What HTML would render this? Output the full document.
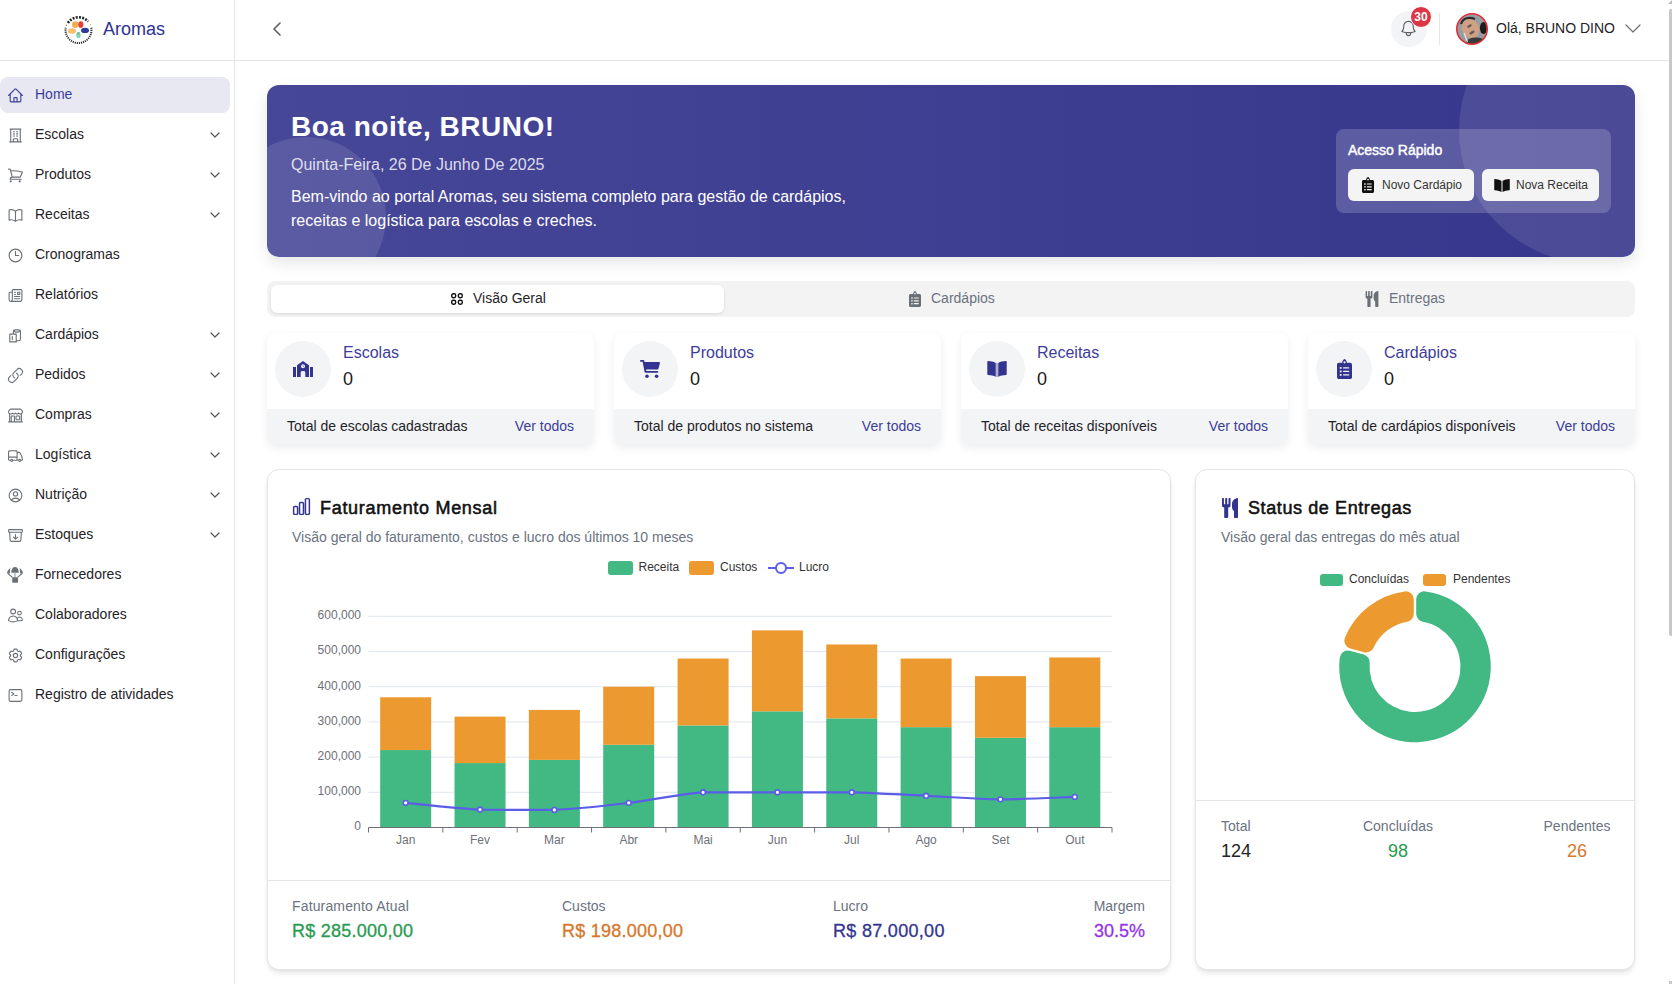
<!DOCTYPE html><html><head><meta charset="utf-8"><style>
html,body{margin:0;padding:0;}
body{width:1672px;height:984px;overflow:hidden;position:relative;background:#fff;font-family:"Liberation Sans", sans-serif;}
.a{position:absolute;display:block;}
.t{position:absolute;white-space:nowrap;line-height:1;}

</style></head><body>
<div class="a" style="left:234px;top:0px;width:1px;height:984px;background:#e4e4e7;"></div>
<div class="a" style="left:0px;top:60px;width:1669px;height:1px;background:#e4e4e7;"></div>
<svg class="a" style="left:61px;top:13px;" width="34" height="34" viewBox="0 0 34 34"><path d="M6.97 9.9 A12.7 12.7 0 0 1 27.08 8.67" fill="none" stroke="#222" stroke-width="2.6" stroke-dasharray="1.9 1.3"/><path d="M30.3 14.74 A13 13 0 1 1 4.7 14.74" fill="none" stroke="#333" stroke-width="2" stroke-dasharray="1.2 .9"/><circle cx="5.4" cy="12.2" r=".6" fill="#d04040"/><circle cx="29.6" cy="11.6" r=".5" fill="#777"/><ellipse cx="14.2" cy="11.6" rx="3.2" ry="3.4" fill="#f0a33a" opacity=".9"/><ellipse cx="19.8" cy="11.6" rx="2.6" ry="3.4" fill="#e23f36"/><ellipse cx="11" cy="18" rx="4" ry="2.8" fill="#f3b65a" opacity=".9"/><ellipse cx="24" cy="17.4" rx="4" ry="2.6" fill="#2f3a9c"/><ellipse cx="17.4" cy="22" rx="2.2" ry="3.2" fill="#6fd3ae" opacity=".9"/><ellipse cx="17.4" cy="20.4" rx="1.6" ry="1" fill="#999" opacity=".7"/></svg>
<div class="t" style="left:103.00px;top:20px;font-size:18px;color:#2e3192;font-weight:400;">Aromas</div>
<div class="a" style="left:0px;top:77px;width:230px;height:36px;background:#e8e8f3;border-radius:8px;"></div>
<div class="t" style="left:35.00px;top:87px;font-size:14px;color:#3c3d99;font-weight:400;">Home</div>
<svg class="a" style="left:6.5px;top:86.5px;" width="17" height="17" viewBox="0 0 24 24"><g><path d="M2.25 12l8.954-8.955c.44-.439 1.152-.439 1.591 0L21.75 12M4.5 9.75v10.125c0 .621.504 1.125 1.125 1.125H9.75v-4.875c0-.621.504-1.125 1.125-1.125h2.25c.621 0 1.125.504 1.125 1.125V21h4.125c.621 0 1.125-.504 1.125-1.125V9.75M8.25 21h8.25" fill="none" stroke="#3c3d99" stroke-width="1.55" stroke-linecap="round" stroke-linejoin="round"/></g></svg>
<div class="t" style="left:35.00px;top:127px;font-size:14px;color:#1f2328;font-weight:400;">Escolas</div>
<svg class="a" style="left:6.5px;top:126.5px;" width="17" height="17" viewBox="0 0 24 24"><g><path d="M3.75 21h16.5M4.5 3h15M5.25 3v18m13.5-18v18M9 6.75h1.5m-1.5 3h1.5m-1.5 3h1.5m3-6H15m-1.5 3H15m-1.5 3H15M9 21v-3.375c0-.621.504-1.125 1.125-1.125h3.75c.621 0 1.125.504 1.125 1.125V21" fill="none" stroke="#6b6f76" stroke-width="1.55" stroke-linecap="round" stroke-linejoin="round"/></g></svg>
<svg class="a" style="left:210px;top:132px;" width="10" height="6" viewBox="0 0 10 6"><path d="M1 1 L5 5 L9 1" fill="none" stroke="#55595f" stroke-width="1.2" stroke-linecap="round" stroke-linejoin="round"/></svg>
<div class="t" style="left:35.00px;top:167px;font-size:14px;color:#1f2328;font-weight:400;">Produtos</div>
<svg class="a" style="left:6.5px;top:166.5px;" width="17" height="17" viewBox="0 0 24 24"><g><path d="M2.25 3h1.386c.51 0 .955.343 1.087.835l.383 1.437M7.5 14.25a3 3 0 00-3 3h15.75m-12.75-3h11.218c1.121-2.3 2.1-4.684 2.924-7.138a60.114 60.114 0 00-16.536-1.84M7.5 14.25L5.106 5.272M6 20.25a.75.75 0 11-1.5 0 .75.75 0 011.5 0zm12.75 0a.75.75 0 11-1.5 0 .75.75 0 011.5 0z" fill="none" stroke="#6b6f76" stroke-width="1.55" stroke-linecap="round" stroke-linejoin="round"/></g></svg>
<svg class="a" style="left:210px;top:172px;" width="10" height="6" viewBox="0 0 10 6"><path d="M1 1 L5 5 L9 1" fill="none" stroke="#55595f" stroke-width="1.2" stroke-linecap="round" stroke-linejoin="round"/></svg>
<div class="t" style="left:35.00px;top:207px;font-size:14px;color:#1f2328;font-weight:400;">Receitas</div>
<svg class="a" style="left:6.5px;top:206.5px;" width="17" height="17" viewBox="0 0 24 24"><g><path d="M12 6.042A8.967 8.967 0 006 3.75c-1.052 0-2.062.18-3 .512v14.25A8.987 8.987 0 016 18c2.305 0 4.408.867 6 2.292m0-14.25a8.966 8.966 0 016-2.292c1.052 0 2.062.18 3 .512v14.25A8.987 8.987 0 0018 18a8.967 8.967 0 00-6 2.292m0-14.25v14.25" fill="none" stroke="#6b6f76" stroke-width="1.55" stroke-linecap="round" stroke-linejoin="round"/></g></svg>
<svg class="a" style="left:210px;top:212px;" width="10" height="6" viewBox="0 0 10 6"><path d="M1 1 L5 5 L9 1" fill="none" stroke="#55595f" stroke-width="1.2" stroke-linecap="round" stroke-linejoin="round"/></svg>
<div class="t" style="left:35.00px;top:247px;font-size:14px;color:#1f2328;font-weight:400;">Cronogramas</div>
<svg class="a" style="left:6.5px;top:246.5px;" width="17" height="17" viewBox="0 0 24 24"><g><path d="M12 6v6h4.5m4.5 0a9 9 0 11-18 0 9 9 0 0118 0z" fill="none" stroke="#6b6f76" stroke-width="1.55" stroke-linecap="round" stroke-linejoin="round"/></g></svg>
<div class="t" style="left:35.00px;top:287px;font-size:14px;color:#1f2328;font-weight:400;">Relatórios</div>
<svg class="a" style="left:6.5px;top:286.5px;" width="17" height="17" viewBox="0 0 24 24"><g transform="translate(24,0) scale(-1,1)"><path d="M12 7.5h1.5m-1.5 3h1.5m-7.5 3h7.5m-7.5 3h7.5m3-9h3.375c.621 0 1.125.504 1.125 1.125V18a2.25 2.25 0 01-2.25 2.25M16.5 7.5V18a2.25 2.25 0 002.25 2.25M16.5 7.5V4.875c0-.621-.504-1.125-1.125-1.125H4.125C3.504 3.75 3 4.254 3 4.875V18a2.25 2.25 0 002.25 2.25h13.5M6 7.5h3v3H6v-3z" fill="none" stroke="#6b6f76" stroke-width="1.55" stroke-linecap="round" stroke-linejoin="round"/></g></svg>
<div class="t" style="left:35.00px;top:327px;font-size:14px;color:#1f2328;font-weight:400;">Cardápios</div>
<svg class="a" style="left:6.5px;top:326.5px;" width="17" height="17" viewBox="0 0 24 24"><g><path d="M4 10h9v11H4z M7.5 13.5v4.5 M9 10V6.5C9 5 10 4 12 4h4c2 0 3 1 3 2.5V17c0 1.5-1 2.5-2.5 2.5H13 M10.5 5.5c0 1 1.5 1.8 3.5 1.8s3.5-.8 3.5-1.8" fill="none" stroke="#6b6f76" stroke-width="1.55" stroke-linecap="round" stroke-linejoin="round"/></g></svg>
<svg class="a" style="left:210px;top:332px;" width="10" height="6" viewBox="0 0 10 6"><path d="M1 1 L5 5 L9 1" fill="none" stroke="#55595f" stroke-width="1.2" stroke-linecap="round" stroke-linejoin="round"/></svg>
<div class="t" style="left:35.00px;top:367px;font-size:14px;color:#1f2328;font-weight:400;">Pedidos</div>
<svg class="a" style="left:6.5px;top:366.5px;" width="17" height="17" viewBox="0 0 24 24"><g><path d="M13.19 8.688a4.5 4.5 0 011.242 7.244l-4.5 4.5a4.5 4.5 0 01-6.364-6.364l1.757-1.757m13.35-.622l1.757-1.757a4.5 4.5 0 00-6.364-6.364l-4.5 4.5a4.5 4.5 0 001.242 7.244" fill="none" stroke="#6b6f76" stroke-width="1.55" stroke-linecap="round" stroke-linejoin="round"/></g></svg>
<svg class="a" style="left:210px;top:372px;" width="10" height="6" viewBox="0 0 10 6"><path d="M1 1 L5 5 L9 1" fill="none" stroke="#55595f" stroke-width="1.2" stroke-linecap="round" stroke-linejoin="round"/></svg>
<div class="t" style="left:35.00px;top:407px;font-size:14px;color:#1f2328;font-weight:400;">Compras</div>
<svg class="a" style="left:6.5px;top:406.5px;" width="17" height="17" viewBox="0 0 24 24"><g transform="translate(24,0) scale(-1,1)"><path d="M13.5 21v-7.5a.75.75 0 01.75-.75h3a.75.75 0 01.75.75V21m-4.5 0H2.36m11.14 0H18m0 0h3.64m-1.39 0V9.349m-16.5 11.65V9.35m0 0a3.001 3.001 0 003.75-.615A2.993 2.993 0 009.75 9.75c.896 0 1.7-.393 2.25-1.016a2.993 2.993 0 002.25 1.016c.896 0 1.7-.393 2.25-1.016a3.001 3.001 0 003.75.614m-16.5 0a3.004 3.004 0 01-.621-4.72L4.318 3.44A1.5 1.5 0 015.378 3h13.243a1.5 1.5 0 011.06.44l1.19 1.189a3 3 0 01-.621 4.72m-13.5 8.65h3.75a.75.75 0 00.75-.75V13.5a.75.75 0 00-.75-.75H6.75a.75.75 0 00-.75.75v3.75c0 .415.336.75.75.75z" fill="none" stroke="#6b6f76" stroke-width="1.55" stroke-linecap="round" stroke-linejoin="round"/></g></svg>
<svg class="a" style="left:210px;top:412px;" width="10" height="6" viewBox="0 0 10 6"><path d="M1 1 L5 5 L9 1" fill="none" stroke="#55595f" stroke-width="1.2" stroke-linecap="round" stroke-linejoin="round"/></svg>
<div class="t" style="left:35.00px;top:447px;font-size:14px;color:#1f2328;font-weight:400;">Logística</div>
<svg class="a" style="left:6.5px;top:446.5px;" width="17" height="17" viewBox="0 0 24 24"><g><path d="M8.25 18.75a1.5 1.5 0 01-3 0m3 0a1.5 1.5 0 00-3 0m3 0h6m-9 0H3.375a1.125 1.125 0 01-1.125-1.125V14.25m17.25 4.5a1.5 1.5 0 01-3 0m3 0a1.5 1.5 0 00-3 0m3 0h1.125c.621 0 1.129-.504 1.09-1.124a17.902 17.902 0 00-3.213-9.193 2.056 2.056 0 00-1.58-.86H14.25M16.5 18.75h-2.25m0-11.177v-.958c0-.568-.422-1.048-.987-1.106a48.554 48.554 0 00-10.026 0 1.106 1.106 0 00-.987 1.106v7.635m12-6.677v6.677m0 4.5v-4.5m0 0h-12" fill="none" stroke="#6b6f76" stroke-width="1.55" stroke-linecap="round" stroke-linejoin="round"/></g></svg>
<svg class="a" style="left:210px;top:452px;" width="10" height="6" viewBox="0 0 10 6"><path d="M1 1 L5 5 L9 1" fill="none" stroke="#55595f" stroke-width="1.2" stroke-linecap="round" stroke-linejoin="round"/></svg>
<div class="t" style="left:35.00px;top:487px;font-size:14px;color:#1f2328;font-weight:400;">Nutrição</div>
<svg class="a" style="left:6.5px;top:486.5px;" width="17" height="17" viewBox="0 0 24 24"><g><path d="M17.982 18.725A7.488 7.488 0 0012 15.75a7.488 7.488 0 00-5.982 2.975m11.963 0a9 9 0 10-11.963 0m11.963 0A8.966 8.966 0 0112 21a8.966 8.966 0 01-5.982-2.275M15 9.75a3 3 0 11-6 0 3 3 0 016 0z" fill="none" stroke="#6b6f76" stroke-width="1.55" stroke-linecap="round" stroke-linejoin="round"/></g></svg>
<svg class="a" style="left:210px;top:492px;" width="10" height="6" viewBox="0 0 10 6"><path d="M1 1 L5 5 L9 1" fill="none" stroke="#55595f" stroke-width="1.2" stroke-linecap="round" stroke-linejoin="round"/></svg>
<div class="t" style="left:35.00px;top:527px;font-size:14px;color:#1f2328;font-weight:400;">Estoques</div>
<svg class="a" style="left:6.5px;top:526.5px;" width="17" height="17" viewBox="0 0 24 24"><g><path d="M20.25 7.5l-.625 10.632a2.25 2.25 0 01-2.247 2.118H6.622a2.25 2.25 0 01-2.247-2.118L3.75 7.5m8.25 3v6.75m0 0l-3-3m3 3l3-3M3.375 7.5h17.25c.621 0 1.125-.504 1.125-1.125v-1.5c0-.621-.504-1.125-1.125-1.125H3.375c-.621 0-1.125.504-1.125 1.125v1.5c0 .621.504 1.125 1.125 1.125z" fill="none" stroke="#6b6f76" stroke-width="1.55" stroke-linecap="round" stroke-linejoin="round"/></g></svg>
<svg class="a" style="left:210px;top:532px;" width="10" height="6" viewBox="0 0 10 6"><path d="M1 1 L5 5 L9 1" fill="none" stroke="#55595f" stroke-width="1.2" stroke-linecap="round" stroke-linejoin="round"/></svg>
<div class="t" style="left:35.00px;top:567px;font-size:14px;color:#1f2328;font-weight:400;">Fornecedores</div>
<svg class="a" style="left:6px;top:566px;" width="18" height="18" viewBox="0 0 18 18"><path fill="#6b6f76" d="M5.2 6.8 C5.2 3 7 1 9 1 S12.8 3 12.8 6.8 Z"/><path fill="#6b6f76" d="M1 7.6 C1.2 5 2.6 3 4.6 2 C4 3.6 3.8 5.4 3.9 7.6 Z M17 7.6 C16.8 5 15.4 3 13.4 2 C14 3.6 14.2 5.4 14.1 7.6 Z"/><path d="M1.8 7.4 L6.4 11.4 M16.2 7.4 L11.6 11.4" stroke="#6b6f76" stroke-width="1.2" fill="none"/><rect x="8.4" y="6.8" width="1.2" height="4.6" fill="#a4a7ab"/><rect x="6.2" y="11.2" width="5.8" height="5.6" rx=".7" fill="#6b6f76"/></svg>
<div class="t" style="left:35.00px;top:607px;font-size:14px;color:#1f2328;font-weight:400;">Colaboradores</div>
<svg class="a" style="left:6.5px;top:606.5px;" width="17" height="17" viewBox="0 0 24 24"><g><path d="M15 19.128a9.38 9.38 0 002.625.372 9.337 9.337 0 004.121-.952 4.125 4.125 0 00-7.533-2.493M15 19.128v-.003c0-1.113-.285-2.16-.786-3.07M15 19.128v.106A12.318 12.318 0 018.624 21c-2.331 0-4.512-.645-6.374-1.766l-.001-.109a6.375 6.375 0 0111.964-3.07M12 6.375a3.375 3.375 0 11-6.75 0 3.375 3.375 0 016.75 0zm8.25 2.25a2.625 2.625 0 11-5.25 0 2.625 2.625 0 015.25 0z" fill="none" stroke="#6b6f76" stroke-width="1.55" stroke-linecap="round" stroke-linejoin="round"/></g></svg>
<div class="t" style="left:35.00px;top:647px;font-size:14px;color:#1f2328;font-weight:400;">Configurações</div>
<svg class="a" style="left:6.5px;top:646.5px;" width="17" height="17" viewBox="0 0 24 24"><g><path d="M9.594 3.94c.09-.542.56-.94 1.11-.94h2.593c.55 0 1.02.398 1.11.94l.213 1.281c.063.374.313.686.645.87.074.04.147.083.22.127.324.196.72.257 1.075.124l1.217-.456a1.125 1.125 0 011.37.49l1.296 2.247a1.125 1.125 0 01-.26 1.431l-1.003.827c-.293.24-.438.613-.431.992a6.759 6.759 0 010 .255c-.007.378.138.75.43.99l1.005.828c.424.35.534.954.26 1.43l-1.298 2.247a1.125 1.125 0 01-1.369.491l-1.217-.456c-.355-.133-.75-.072-1.076.124a6.57 6.57 0 01-.22.128c-.331.183-.581.495-.644.869l-.213 1.28c-.09.543-.56.941-1.11.941h-2.594c-.55 0-1.02-.398-1.11-.94l-.213-1.281c-.062-.374-.312-.686-.644-.87a6.52 6.52 0 01-.22-.127c-.325-.196-.72-.257-1.076-.124l-1.217.456a1.125 1.125 0 01-1.369-.49l-1.297-2.247a1.125 1.125 0 01.26-1.431l1.004-.827c.292-.24.437-.613.43-.992a6.932 6.932 0 010-.255c.007-.378-.138-.75-.43-.99l-1.004-.828a1.125 1.125 0 01-.26-1.43l1.297-2.247a1.125 1.125 0 011.37-.491l1.216.456c.356.133.751.072 1.076-.124.072-.044.146-.087.22-.128.332-.183.582-.495.644-.869l.214-1.281zM15 12a3 3 0 11-6 0 3 3 0 016 0z" fill="none" stroke="#6b6f76" stroke-width="1.55" stroke-linecap="round" stroke-linejoin="round"/></g></svg>
<div class="t" style="left:35.00px;top:687px;font-size:14px;color:#1f2328;font-weight:400;">Registro de atividades</div>
<svg class="a" style="left:6.5px;top:686.5px;" width="17" height="17" viewBox="0 0 24 24"><g><path d="M6.75 7.5l3 2.25-3 2.25m4.5 0h3m-9 8.25h13.5A2.25 2.25 0 0021 18V6a2.25 2.25 0 00-2.25-2.25H5.25A2.25 2.25 0 003 6v12a2.25 2.25 0 002.25 2.25z" fill="none" stroke="#6b6f76" stroke-width="1.55" stroke-linecap="round" stroke-linejoin="round"/></g></svg>
<svg class="a" style="left:272px;top:22px;" width="10" height="14" viewBox="0 0 10 14"><path d="M8 1 L2 7 L8 13" fill="none" stroke="#5b5f66" stroke-width="1.6" stroke-linecap="round" stroke-linejoin="round"/></svg>
<div class="a" style="left:1391px;top:11px;width:36px;height:36px;border-radius:50%;background:#f3f4f6;"></div>
<svg class="a" style="left:1399px;top:19px;" width="19" height="19" viewBox="0 0 24 24"><g><path d="M14.857 17.082a23.848 23.848 0 005.454-1.31A8.967 8.967 0 0118 9.75v-.7V9A6 6 0 006 9v.75a8.967 8.967 0 01-2.312 6.022c1.733.64 3.56 1.085 5.455 1.31m5.714 0a24.255 24.255 0 01-5.714 0m5.714 0a3 3 0 11-5.714 0" fill="none" stroke="#5b5f66" stroke-width="1.4" stroke-linecap="round" stroke-linejoin="round"/></g></svg>
<div class="a" style="left:1410px;top:6px;width:22px;height:22px;border-radius:50%;background:#dc3545;box-sizing:border-box;border:1.5px solid #fff;"></div>
<div class="t" style="left:1021.00px;width:800px;text-align:center;top:11px;font-size:12px;color:#fff;font-weight:700;">30</div>
<div class="a" style="left:1439px;top:13px;width:1px;height:32px;background:#e4e4e7;"></div>
<svg class="a" style="left:1456px;top:13px;" width="32" height="32" viewBox="0 0 32 32"><defs><clipPath id="avc"><circle cx="16" cy="16" r="15"/></clipPath></defs><g clip-path="url(#avc)"><rect width="32" height="32" fill="#979ca2"/><ellipse cx="14.5" cy="15.5" rx="8.5" ry="10" transform="rotate(-30 14.5 15.5)" fill="#d0a084"/><path d="M5 11 C7 5 13 3.5 19 6" stroke="#2c2c2e" stroke-width="2.2" fill="none"/><ellipse cx="27.5" cy="15" rx="3.6" ry="6" fill="#1c1c1e"/><ellipse cx="20" cy="29.5" rx="10" ry="5" fill="#3b3b3d"/><path d="M8 20 L11.5 29" stroke="#e6e6e6" stroke-width="1.3"/><ellipse cx="13.5" cy="13" rx="2.5" ry="1.2" transform="rotate(-30 13.5 13)" fill="#5b5558"/><ellipse cx="16" cy="19.5" rx="3" ry="1.3" transform="rotate(-30 16 19.5)" fill="#6a5a5a"/></g><circle cx="16" cy="16" r="15.2" fill="none" stroke="#e12a30" stroke-width="1.6"/></svg>
<div class="t" style="left:1496.00px;top:21px;font-size:14px;color:#1f2328;font-weight:400;">Olá, BRUNO DINO</div>
<svg class="a" style="left:1624px;top:23px;" width="18" height="12" viewBox="0 0 18 12"><path d="M2 2 L9 9 L16 2" fill="none" stroke="#6b6f76" stroke-width="1.2" stroke-linecap="round" stroke-linejoin="round"/></svg>
<div class="a" style="left:267px;top:85px;width:1368px;height:172px;border-radius:12px;overflow:hidden;background:linear-gradient(90deg,#474798 0%,#3e3e92 50%,#36368c 100%);box-shadow:0 6px 16px rgba(0,0,0,0.10);"><div class="a" style="left:-41px;top:52px;width:160px;height:160px;border-radius:50%;background:rgba(255,255,255,0.11);"></div><div class="a" style="left:1192px;top:-88px;width:266px;height:266px;border-radius:50%;background:rgba(255,255,255,0.10);"></div></div>
<div class="t" style="left:291.00px;top:113px;font-size:28px;color:#fff;font-weight:700;letter-spacing:0.5px;">Boa noite, BRUNO!</div>
<div class="t" style="left:291.00px;top:157px;font-size:16px;color:rgba(255,255,255,0.82);font-weight:400;">Quinta-Feira, 26 De Junho De 2025</div>
<div class="t" style="left:291.00px;top:189px;font-size:16px;color:#fff;font-weight:400;">Bem-vindo ao portal Aromas, seu sistema completo para gestão de cardápios,</div>
<div class="t" style="left:291.00px;top:213px;font-size:16px;color:#fff;font-weight:400;">receitas e logística para escolas e creches.</div>
<div class="a" style="left:1336px;top:129px;width:275px;height:84px;background:rgba(255,255,255,0.18);border-radius:8px;"></div>
<div class="t" style="left:1348.00px;top:143px;font-size:14px;color:#fff;font-weight:400;-webkit-text-stroke:0.45px #fff;">Acesso Rápido</div>
<div class="a" style="left:1348px;top:169px;width:126px;height:32px;background:#f4f4f4;border-radius:6px;"></div>
<div class="a" style="left:1482px;top:169px;width:117px;height:32px;background:#f4f4f4;border-radius:6px;"></div>
<svg class="a" style="left:1362px;top:177px;" width="12" height="16" viewBox="0 0 12 16"><path fill="#111" d="M1.5 3 H4 C4.3 1.3 5.5 0 6 0 S7.7 1.3 8 3 H10.5 C11.3 3 12 3.7 12 4.5 V14.5 C12 15.3 11.3 16 10.5 16 H1.5 C0.7 16 0 15.3 0 14.5 V4.5 C0 3.7 0.7 3 1.5 3 Z"/><circle cx="6" cy="2.6" r="0.9" fill="#f4f4f4"/><g fill="#f4f4f4"><rect x="2.2" y="6.3" width="1.5" height="1.5" rx=".4"/><rect x="2.2" y="9.1" width="1.5" height="1.5" rx=".4"/><rect x="2.2" y="11.9" width="1.5" height="1.5" rx=".4"/><rect x="4.8" y="6.5" width="5" height="1.1" rx=".5"/><rect x="4.8" y="9.3" width="5" height="1.1" rx=".5"/><rect x="4.8" y="12.1" width="5" height="1.1" rx=".5"/></g></svg>
<div class="t" style="left:1382.00px;top:179px;font-size:12px;color:#333;font-weight:400;">Novo Cardápio</div>
<svg class="a" style="left:1494px;top:179px;" width="16" height="13" viewBox="0 0 20 16"><path fill="#111" d="M0.3 0.6 C0.3 0.2 0.6 0 1 0 C4 0.1 6.5 0.6 8.8 2 V15.8 C6.5 14.6 4 14 1 13.9 C0.6 13.9 0.3 13.6 0.3 13.2 Z"/><path fill="#111" d="M19.7 0.6 C19.7 0.2 19.4 0 19 0 C16 0.1 13.5 0.6 11.2 2 V15.8 C13.5 14.6 16 14 19 13.9 C19.4 13.9 19.7 13.6 19.7 13.2 Z"/><rect x="8.9" y="2" width="2.2" height="14" fill="#777"/></svg>
<div class="t" style="left:1516.00px;top:179px;font-size:12px;color:#333;font-weight:400;">Nova Receita</div>
<div class="a" style="left:267px;top:281px;width:1368px;height:36px;background:#f3f3f3;border-radius:8px;"></div>
<div class="a" style="left:271px;top:285px;width:453px;height:28px;background:#fff;border-radius:6px;box-shadow:0 1px 3px rgba(0,0,0,0.12);"></div>
<svg class="a" style="left:451px;top:293px;" width="12" height="12" viewBox="0 0 12 12"><g fill="none" stroke="#111" stroke-width="1.4"><rect x="0.7" y="0.7" width="4" height="4" rx="1.7"/><rect x="7.3" y="0.7" width="4" height="4" rx="1.7"/><rect x="0.7" y="7.3" width="4" height="4" rx="1.7"/><rect x="7.3" y="7.3" width="4" height="4" rx="1.7"/></g></svg>
<div class="t" style="left:473.00px;top:291px;font-size:14px;color:#1f2328;font-weight:400;">Visão Geral</div>
<svg class="a" style="left:909px;top:291px;" width="12" height="16" viewBox="0 0 12 16"><path fill="#6b6f76" d="M1.5 3 H4 C4.3 1.3 5.5 0 6 0 S7.7 1.3 8 3 H10.5 C11.3 3 12 3.7 12 4.5 V14.5 C12 15.3 11.3 16 10.5 16 H1.5 C0.7 16 0 15.3 0 14.5 V4.5 C0 3.7 0.7 3 1.5 3 Z"/><circle cx="6" cy="2.6" r="0.9" fill="#f3f3f3"/><g fill="#f3f3f3"><rect x="2.2" y="6.3" width="1.5" height="1.5" rx=".4"/><rect x="2.2" y="9.1" width="1.5" height="1.5" rx=".4"/><rect x="2.2" y="11.9" width="1.5" height="1.5" rx=".4"/><rect x="4.8" y="6.5" width="5" height="1.1" rx=".5"/><rect x="4.8" y="9.3" width="5" height="1.1" rx=".5"/><rect x="4.8" y="12.1" width="5" height="1.1" rx=".5"/></g></svg>
<div class="t" style="left:931.00px;top:291px;font-size:14px;color:#6b7280;font-weight:400;">Cardápios</div>
<svg class="a" style="left:1365px;top:291px;" width="14" height="16" viewBox="0 0 16 20"><path fill="#6b6f76" d="M0 0.6 C0 .3 .3 0 .6 0 H1.3 C1.6 0 1.9 .3 1.9 .6 V6.2 H3.2 V.6 C3.2 .3 3.5 0 3.8 0 H4.6 C4.9 0 5.2 .3 5.2 .6 V6.2 H6.5 V.6 C6.5 .3 6.8 0 7.1 0 H7.9 C8.2 0 8.5 .3 8.5 .6 V7.8 C8.5 8.8 7.7 9.3 6.2 9.4 V19.2 C6.2 19.6 5.9 20 5.5 20 H2.9 C2.5 20 2.2 19.6 2.2 19.2 V9.4 C.8 9.3 0 8.8 0 7.8 Z"/><path fill="#6b6f76" d="M16 .6 V19.2 C16 19.6 15.7 20 15.3 20 H12.7 C12.3 20 12 19.6 12 19.2 V13 C11 12.5 10 11 10 9 V6 C10 2.5 12.5 .6 15.3 0 C15.7 0 16 .2 16 .6 Z"/></svg>
<div class="t" style="left:1389.00px;top:291px;font-size:14px;color:#6b7280;font-weight:400;">Entregas</div>
<div class="a" style="left:267px;top:333px;width:327px;height:112px;border-radius:8px;background:#fff;overflow:hidden;box-shadow:0 3px 10px rgba(0,0,0,0.07);"><div class="a" style="left:0;top:76px;width:327px;height:36px;background:#f3f4f6;"></div></div>
<div class="a" style="left:275px;top:341px;width:56px;height:56px;border-radius:50%;background:#f3f4f6;"></div>
<svg class="a" style="left:293px;top:361px;" width="20" height="16" viewBox="0 0 20 16"><path fill="#33348f" d="M0 6 h3 v10 H0 Z M17 6 h3 v10 h-3 Z"/><path fill="#33348f" d="M4 4.3 L10 0 L16 4.3 V16 H12.3 V11.5 C12.3 10.6 11.5 10 10.6 10 H9.4 C8.5 10 7.7 10.6 7.7 11.5 V16 H4 Z"/><circle cx="10" cy="5.2" r="2" fill="#f3f4f6"/><path d="M10 4.2 v1.1 l.8.5" stroke="#33348f" stroke-width=".6" fill="none"/></svg>
<div class="t" style="left:343.00px;top:345px;font-size:16px;color:#3c3d99;font-weight:400;">Escolas</div>
<div class="t" style="left:343.00px;top:370px;font-size:18px;color:#1a1a1a;font-weight:400;">0</div>
<div class="t" style="left:287.00px;top:419px;font-size:14px;color:#1f2328;font-weight:400;">Total de escolas cadastradas</div>
<div class="t" style="left:-226.00px;width:800px;text-align:right;top:419px;font-size:14px;color:#3c3d99;font-weight:400;">Ver todos</div>
<div class="a" style="left:614px;top:333px;width:327px;height:112px;border-radius:8px;background:#fff;overflow:hidden;box-shadow:0 3px 10px rgba(0,0,0,0.07);"><div class="a" style="left:0;top:76px;width:327px;height:36px;background:#f3f4f6;"></div></div>
<div class="a" style="left:622px;top:341px;width:56px;height:56px;border-radius:50%;background:#f3f4f6;"></div>
<svg class="a" style="left:640px;top:360px;" width="20" height="18" viewBox="0 0 20 18"><path fill="#33348f" d="M0.9 0 H3.3 C3.8 0 4.2 0.3 4.3 0.8 L4.5 2 H19 C19.6 2 20.1 2.6 19.9 3.2 L18.5 8.6 C18.3 9.1 17.9 9.5 17.3 9.5 H6.1 L6.4 11 H17.4 C17.9 11 18.3 11.4 18.3 11.9 S17.9 12.8 17.4 12.8 H5.6 C5.1 12.8 4.7 12.5 4.6 12 L2.6 1.8 H0.9 C0.4 1.8 0 1.4 0 0.9 S0.4 0 0.9 0 Z"/><circle cx="7" cy="16.2" r="1.8" fill="#33348f"/><circle cx="16.6" cy="16.2" r="1.8" fill="#33348f"/></svg>
<div class="t" style="left:690.00px;top:345px;font-size:16px;color:#3c3d99;font-weight:400;">Produtos</div>
<div class="t" style="left:690.00px;top:370px;font-size:18px;color:#1a1a1a;font-weight:400;">0</div>
<div class="t" style="left:634.00px;top:419px;font-size:14px;color:#1f2328;font-weight:400;">Total de produtos no sistema</div>
<div class="t" style="left:121.00px;width:800px;text-align:right;top:419px;font-size:14px;color:#3c3d99;font-weight:400;">Ver todos</div>
<div class="a" style="left:961px;top:333px;width:327px;height:112px;border-radius:8px;background:#fff;overflow:hidden;box-shadow:0 3px 10px rgba(0,0,0,0.07);"><div class="a" style="left:0;top:76px;width:327px;height:36px;background:#f3f4f6;"></div></div>
<div class="a" style="left:969px;top:341px;width:56px;height:56px;border-radius:50%;background:#f3f4f6;"></div>
<svg class="a" style="left:987px;top:361px;" width="20" height="16" viewBox="0 0 20 16"><path fill="#33348f" d="M0.3 0.6 C0.3 0.2 0.6 0 1 0 C4 0.1 6.5 0.6 8.8 2 V15.8 C6.5 14.6 4 14 1 13.9 C0.6 13.9 0.3 13.6 0.3 13.2 Z"/><path fill="#33348f" d="M19.7 0.6 C19.7 0.2 19.4 0 19 0 C16 0.1 13.5 0.6 11.2 2 V15.8 C13.5 14.6 16 14 19 13.9 C19.4 13.9 19.7 13.6 19.7 13.2 Z"/><rect x="8.9" y="2" width="2.2" height="14" fill="#aeb0d0"/></svg>
<div class="t" style="left:1037.00px;top:345px;font-size:16px;color:#3c3d99;font-weight:400;">Receitas</div>
<div class="t" style="left:1037.00px;top:370px;font-size:18px;color:#1a1a1a;font-weight:400;">0</div>
<div class="t" style="left:981.00px;top:419px;font-size:14px;color:#1f2328;font-weight:400;">Total de receitas disponíveis</div>
<div class="t" style="left:468.00px;width:800px;text-align:right;top:419px;font-size:14px;color:#3c3d99;font-weight:400;">Ver todos</div>
<div class="a" style="left:1308px;top:333px;width:327px;height:112px;border-radius:8px;background:#fff;overflow:hidden;box-shadow:0 3px 10px rgba(0,0,0,0.07);"><div class="a" style="left:0;top:76px;width:327px;height:36px;background:#f3f4f6;"></div></div>
<div class="a" style="left:1316px;top:341px;width:56px;height:56px;border-radius:50%;background:#f3f4f6;"></div>
<svg class="a" style="left:1337px;top:359px;" width="15" height="20" viewBox="0 0 12 16"><path fill="#33348f" d="M1.5 3 H4 C4.3 1.3 5.5 0 6 0 S7.7 1.3 8 3 H10.5 C11.3 3 12 3.7 12 4.5 V14.5 C12 15.3 11.3 16 10.5 16 H1.5 C0.7 16 0 15.3 0 14.5 V4.5 C0 3.7 0.7 3 1.5 3 Z"/><circle cx="6" cy="2.6" r="0.9" fill="#f3f4f6"/><g fill="#f3f4f6"><rect x="2.2" y="6.3" width="1.5" height="1.5" rx=".4"/><rect x="2.2" y="9.1" width="1.5" height="1.5" rx=".4"/><rect x="2.2" y="11.9" width="1.5" height="1.5" rx=".4"/><rect x="4.8" y="6.5" width="5" height="1.1" rx=".5"/><rect x="4.8" y="9.3" width="5" height="1.1" rx=".5"/><rect x="4.8" y="12.1" width="5" height="1.1" rx=".5"/></g></svg>
<div class="t" style="left:1384.00px;top:345px;font-size:16px;color:#3c3d99;font-weight:400;">Cardápios</div>
<div class="t" style="left:1384.00px;top:370px;font-size:18px;color:#1a1a1a;font-weight:400;">0</div>
<div class="t" style="left:1328.00px;top:419px;font-size:14px;color:#1f2328;font-weight:400;">Total de cardápios disponíveis</div>
<div class="t" style="left:815.00px;width:800px;text-align:right;top:419px;font-size:14px;color:#3c3d99;font-weight:400;">Ver todos</div>
<div class="a" style="left:267px;top:469px;width:904px;height:501px;box-sizing:border-box;border:1px solid #e4e4e7;border-radius:12px;background:#fff;box-shadow:0 4px 6px -1px rgba(0,0,0,0.09),0 2px 4px -2px rgba(0,0,0,0.09);"></div>
<svg class="a" style="left:291px;top:496px;" width="21" height="21" viewBox="0 0 24 24"><g><path d="M3 13.125C3 12.504 3.504 12 4.125 12h2.25c.621 0 1.125.504 1.125 1.125v6.75C7.5 20.496 6.996 21 6.375 21h-2.25A1.125 1.125 0 013 19.875v-6.75zM9.75 8.625c0-.621.504-1.125 1.125-1.125h2.25c.621 0 1.125.504 1.125 1.125v11.25c0 .621-.504 1.125-1.125 1.125h-2.25a1.125 1.125 0 01-1.125-1.125V8.625zM16.5 4.125c0-.621.504-1.125 1.125-1.125h2.25C20.496 3 21 3.504 21 4.125v15.75c0 .621-.504 1.125-1.125 1.125h-2.25a1.125 1.125 0 01-1.125-1.125V4.125z" fill="none" stroke="#33348f" stroke-width="1.7" stroke-linecap="round" stroke-linejoin="round"/></g></svg>
<div class="t" style="left:320.00px;top:499px;font-size:18px;color:#111;font-weight:400;-webkit-text-stroke:0.55px #111;letter-spacing:0.7px;">Faturamento Mensal</div>
<div class="t" style="left:292.00px;top:530px;font-size:14px;color:#6b7280;font-weight:400;">Visão geral do faturamento, custos e lucro dos últimos 10 meses</div>
<div class="a" style="left:608px;top:561px;width:25px;height:14px;background:#42b883;border-radius:3px;"></div>
<div class="t" style="left:638.50px;top:561px;font-size:12px;color:#333;font-weight:400;">Receita</div>
<div class="a" style="left:689px;top:561px;width:25px;height:14px;background:#ec9a30;border-radius:3px;"></div>
<div class="t" style="left:720.00px;top:561px;font-size:12px;color:#333;font-weight:400;">Custos</div>
<svg class="a" style="left:768px;top:561px;" width="26" height="14" viewBox="0 0 26 14"><path d="M0 7 H26" stroke="#5b5ce8" stroke-width="2"/><circle cx="13" cy="7" r="5" fill="#fff" stroke="#5b5ce8" stroke-width="2"/></svg>
<div class="t" style="left:799.00px;top:561px;font-size:12px;color:#333;font-weight:400;">Lucro</div>
<svg class="a" style="left:0;top:0" width="1672" height="984" viewBox="0 0 1672 984"><line x1="368.5" y1="792.30" x2="1112.0" y2="792.30" stroke="#e0e6f1" stroke-width="1"/><line x1="368.5" y1="757.10" x2="1112.0" y2="757.10" stroke="#e0e6f1" stroke-width="1"/><line x1="368.5" y1="721.90" x2="1112.0" y2="721.90" stroke="#e0e6f1" stroke-width="1"/><line x1="368.5" y1="686.70" x2="1112.0" y2="686.70" stroke="#e0e6f1" stroke-width="1"/><line x1="368.5" y1="651.50" x2="1112.0" y2="651.50" stroke="#e0e6f1" stroke-width="1"/><line x1="368.5" y1="616.30" x2="1112.0" y2="616.30" stroke="#e0e6f1" stroke-width="1"/><rect x="380.18" y="750.06" width="51" height="77.44" fill="#42b883"/><rect x="380.18" y="697.26" width="51" height="52.80" fill="#ec9a30"/><rect x="454.52" y="763.08" width="51" height="64.42" fill="#42b883"/><rect x="454.52" y="716.62" width="51" height="46.46" fill="#ec9a30"/><rect x="528.88" y="759.92" width="51" height="67.58" fill="#42b883"/><rect x="528.88" y="709.93" width="51" height="49.98" fill="#ec9a30"/><rect x="603.22" y="744.78" width="51" height="82.72" fill="#42b883"/><rect x="603.22" y="686.70" width="51" height="58.08" fill="#ec9a30"/><rect x="677.58" y="725.42" width="51" height="102.08" fill="#42b883"/><rect x="677.58" y="658.54" width="51" height="66.88" fill="#ec9a30"/><rect x="751.92" y="711.34" width="51" height="116.16" fill="#42b883"/><rect x="751.92" y="630.38" width="51" height="80.96" fill="#ec9a30"/><rect x="826.27" y="718.38" width="51" height="109.12" fill="#42b883"/><rect x="826.27" y="644.46" width="51" height="73.92" fill="#ec9a30"/><rect x="900.62" y="727.18" width="51" height="100.32" fill="#42b883"/><rect x="900.62" y="658.54" width="51" height="68.64" fill="#ec9a30"/><rect x="974.97" y="737.74" width="51" height="89.76" fill="#42b883"/><rect x="974.97" y="676.14" width="51" height="61.60" fill="#ec9a30"/><rect x="1049.32" y="727.18" width="51" height="100.32" fill="#42b883"/><rect x="1049.32" y="657.48" width="51" height="69.70" fill="#ec9a30"/><line x1="368.5" y1="827.5" x2="1112.0" y2="827.5" stroke="#6e7079" stroke-width="1.2"/><line x1="368.50" y1="827.5" x2="368.50" y2="832.5" stroke="#6e7079" stroke-width="1"/><line x1="442.85" y1="827.5" x2="442.85" y2="832.5" stroke="#6e7079" stroke-width="1"/><line x1="517.20" y1="827.5" x2="517.20" y2="832.5" stroke="#6e7079" stroke-width="1"/><line x1="591.55" y1="827.5" x2="591.55" y2="832.5" stroke="#6e7079" stroke-width="1"/><line x1="665.90" y1="827.5" x2="665.90" y2="832.5" stroke="#6e7079" stroke-width="1"/><line x1="740.25" y1="827.5" x2="740.25" y2="832.5" stroke="#6e7079" stroke-width="1"/><line x1="814.60" y1="827.5" x2="814.60" y2="832.5" stroke="#6e7079" stroke-width="1"/><line x1="888.95" y1="827.5" x2="888.95" y2="832.5" stroke="#6e7079" stroke-width="1"/><line x1="963.30" y1="827.5" x2="963.30" y2="832.5" stroke="#6e7079" stroke-width="1"/><line x1="1037.65" y1="827.5" x2="1037.65" y2="832.5" stroke="#6e7079" stroke-width="1"/><line x1="1112.00" y1="827.5" x2="1112.00" y2="832.5" stroke="#6e7079" stroke-width="1"/><path d="M405.68 802.86 C418.69 804.03 454.00 808.32 480.02 809.55 C506.05 809.90 528.35 809.90 554.38 809.90 C580.40 808.73 602.70 805.94 628.72 802.86 C654.75 799.78 677.05 794.15 703.08 792.30 C729.10 792.30 751.40 792.30 777.42 792.30 C803.45 792.30 825.75 792.30 851.77 792.30 C877.80 792.92 900.10 794.59 926.12 795.82 C952.15 797.05 974.45 799.16 1000.47 799.34 C1026.50 799.34 1061.81 797.31 1074.82 796.88" fill="none" stroke="#5b5ce8" stroke-width="2.2"/><circle cx="405.68" cy="802.86" r="2.4" fill="#fff" stroke="#5b5ce8" stroke-width="1.6"/><circle cx="480.02" cy="809.55" r="2.4" fill="#fff" stroke="#5b5ce8" stroke-width="1.6"/><circle cx="554.38" cy="809.90" r="2.4" fill="#fff" stroke="#5b5ce8" stroke-width="1.6"/><circle cx="628.72" cy="802.86" r="2.4" fill="#fff" stroke="#5b5ce8" stroke-width="1.6"/><circle cx="703.08" cy="792.30" r="2.4" fill="#fff" stroke="#5b5ce8" stroke-width="1.6"/><circle cx="777.42" cy="792.30" r="2.4" fill="#fff" stroke="#5b5ce8" stroke-width="1.6"/><circle cx="851.77" cy="792.30" r="2.4" fill="#fff" stroke="#5b5ce8" stroke-width="1.6"/><circle cx="926.12" cy="795.82" r="2.4" fill="#fff" stroke="#5b5ce8" stroke-width="1.6"/><circle cx="1000.47" cy="799.34" r="2.4" fill="#fff" stroke="#5b5ce8" stroke-width="1.6"/><circle cx="1074.82" cy="796.88" r="2.4" fill="#fff" stroke="#5b5ce8" stroke-width="1.6"/></svg>
<div class="t" style="left:-439.00px;width:800px;text-align:right;top:820px;font-size:12px;color:#6e7079;font-weight:400;">0</div>
<div class="t" style="left:-439.00px;width:800px;text-align:right;top:785px;font-size:12px;color:#6e7079;font-weight:400;">100,000</div>
<div class="t" style="left:-439.00px;width:800px;text-align:right;top:750px;font-size:12px;color:#6e7079;font-weight:400;">200,000</div>
<div class="t" style="left:-439.00px;width:800px;text-align:right;top:715px;font-size:12px;color:#6e7079;font-weight:400;">300,000</div>
<div class="t" style="left:-439.00px;width:800px;text-align:right;top:680px;font-size:12px;color:#6e7079;font-weight:400;">400,000</div>
<div class="t" style="left:-439.00px;width:800px;text-align:right;top:644px;font-size:12px;color:#6e7079;font-weight:400;">500,000</div>
<div class="t" style="left:-439.00px;width:800px;text-align:right;top:609px;font-size:12px;color:#6e7079;font-weight:400;">600,000</div>
<div class="t" style="left:5.68px;width:800px;text-align:center;top:834px;font-size:12px;color:#6e7079;font-weight:400;">Jan</div>
<div class="t" style="left:80.02px;width:800px;text-align:center;top:834px;font-size:12px;color:#6e7079;font-weight:400;">Fev</div>
<div class="t" style="left:154.38px;width:800px;text-align:center;top:834px;font-size:12px;color:#6e7079;font-weight:400;">Mar</div>
<div class="t" style="left:228.72px;width:800px;text-align:center;top:834px;font-size:12px;color:#6e7079;font-weight:400;">Abr</div>
<div class="t" style="left:303.08px;width:800px;text-align:center;top:834px;font-size:12px;color:#6e7079;font-weight:400;">Mai</div>
<div class="t" style="left:377.42px;width:800px;text-align:center;top:834px;font-size:12px;color:#6e7079;font-weight:400;">Jun</div>
<div class="t" style="left:451.77px;width:800px;text-align:center;top:834px;font-size:12px;color:#6e7079;font-weight:400;">Jul</div>
<div class="t" style="left:526.12px;width:800px;text-align:center;top:834px;font-size:12px;color:#6e7079;font-weight:400;">Ago</div>
<div class="t" style="left:600.47px;width:800px;text-align:center;top:834px;font-size:12px;color:#6e7079;font-weight:400;">Set</div>
<div class="t" style="left:674.82px;width:800px;text-align:center;top:834px;font-size:12px;color:#6e7079;font-weight:400;">Out</div>
<div class="a" style="left:268px;top:880px;width:902px;height:1px;background:#e4e4e7;"></div>
<div class="t" style="left:292.00px;top:899px;font-size:14px;color:#6b7280;font-weight:400;letter-spacing:0.15px;">Faturamento Atual</div>
<div class="t" style="left:292.00px;top:922px;font-size:18px;color:#289b50;font-weight:400;-webkit-text-stroke:0.3px #289b50;letter-spacing:0.25px;">R$ 285.000,00</div>
<div class="t" style="left:562.00px;top:899px;font-size:14px;color:#6b7280;font-weight:400;">Custos</div>
<div class="t" style="left:562.00px;top:922px;font-size:18px;color:#d6772a;font-weight:400;-webkit-text-stroke:0.3px #d6772a;letter-spacing:0.25px;">R$ 198.000,00</div>
<div class="t" style="left:833.00px;top:899px;font-size:14px;color:#6b7280;font-weight:400;">Lucro</div>
<div class="t" style="left:833.00px;top:922px;font-size:18px;color:#33358f;font-weight:400;-webkit-text-stroke:0.3px #33358f;letter-spacing:0.3px;">R$ 87.000,00</div>
<div class="t" style="left:345.00px;width:800px;text-align:right;top:899px;font-size:14px;color:#6b7280;font-weight:400;">Margem</div>
<div class="t" style="left:345.00px;width:800px;text-align:right;top:922px;font-size:18px;color:#9333ea;font-weight:400;-webkit-text-stroke:0.3px #9333ea;">30.5%</div>
<div class="a" style="left:1195px;top:469px;width:440px;height:501px;box-sizing:border-box;border:1px solid #e4e4e7;border-radius:12px;background:#fff;box-shadow:0 4px 6px -1px rgba(0,0,0,0.09),0 2px 4px -2px rgba(0,0,0,0.09);"></div>
<svg class="a" style="left:1222px;top:498px;" width="16" height="20" viewBox="0 0 16 20"><path fill="#33348f" d="M0 0.6 C0 .3 .3 0 .6 0 H1.3 C1.6 0 1.9 .3 1.9 .6 V6.2 H3.2 V.6 C3.2 .3 3.5 0 3.8 0 H4.6 C4.9 0 5.2 .3 5.2 .6 V6.2 H6.5 V.6 C6.5 .3 6.8 0 7.1 0 H7.9 C8.2 0 8.5 .3 8.5 .6 V7.8 C8.5 8.8 7.7 9.3 6.2 9.4 V19.2 C6.2 19.6 5.9 20 5.5 20 H2.9 C2.5 20 2.2 19.6 2.2 19.2 V9.4 C.8 9.3 0 8.8 0 7.8 Z"/><path fill="#33348f" d="M16 .6 V19.2 C16 19.6 15.7 20 15.3 20 H12.7 C12.3 20 12 19.6 12 19.2 V13 C11 12.5 10 11 10 9 V6 C10 2.5 12.5 .6 15.3 0 C15.7 0 16 .2 16 .6 Z"/></svg>
<div class="t" style="left:1248.00px;top:499px;font-size:18px;color:#111;font-weight:400;-webkit-text-stroke:0.55px #111;letter-spacing:0.6px;">Status de Entregas</div>
<div class="t" style="left:1221.00px;top:530px;font-size:14px;color:#6b7280;font-weight:400;">Visão geral das entregas do mês atual</div>
<div class="a" style="left:1320px;top:574px;width:23px;height:12px;background:#42b883;border-radius:3px;"></div>
<div class="t" style="left:1349.00px;top:573px;font-size:12px;color:#333;font-weight:400;">Concluídas</div>
<div class="a" style="left:1423px;top:574px;width:23px;height:12px;background:#ec9a30;border-radius:3px;"></div>
<div class="t" style="left:1453.00px;top:573px;font-size:12px;color:#333;font-weight:400;">Pendentes</div>
<svg class="a" style="left:0;top:0" width="1672" height="984" viewBox="0 0 1672 984"><path d="M1416.20 599.33 A8 8 0 0 1 1425.29 591.40 A75.8 75.8 0 1 1 1339.72 657.63 A8 8 0 0 1 1349.67 650.82 L1363.68 654.45 A8 8 0 0 1 1369.65 662.84 A45.5 45.5 0 1 0 1422.82 621.68 A8 8 0 0 1 1416.20 613.80 Z" fill="#42b883"/><path d="M1350.27 648.50 A8 8 0 0 1 1344.88 637.72 A75.8 75.8 0 0 1 1404.71 591.40 A8 8 0 0 1 1413.80 599.33 L1413.80 613.80 A8 8 0 0 1 1407.18 621.68 A45.5 45.5 0 0 0 1373.57 647.69 A8 8 0 0 1 1364.28 652.13 Z" fill="#ec9a30"/></svg>
<div class="a" style="left:1196px;top:800px;width:438px;height:1px;background:#e4e4e7;"></div>
<div class="t" style="left:1221.00px;top:819px;font-size:14px;color:#6b7280;font-weight:400;">Total</div>
<div class="t" style="left:1221.00px;top:842px;font-size:18px;color:#1f2328;font-weight:400;">124</div>
<div class="t" style="left:998.00px;width:800px;text-align:center;top:819px;font-size:14px;color:#6b7280;font-weight:400;">Concluídas</div>
<div class="t" style="left:998.00px;width:800px;text-align:center;top:842px;font-size:18px;color:#289b50;font-weight:400;">98</div>
<div class="t" style="left:1177.00px;width:800px;text-align:center;top:819px;font-size:14px;color:#6b7280;font-weight:400;">Pendentes</div>
<div class="t" style="left:1177.00px;width:800px;text-align:center;top:842px;font-size:18px;color:#d6772a;font-weight:400;">26</div>
<div class="a" style="left:1669px;top:9px;width:3px;height:627px;background:#c8c8c8;border-radius:2px 0 0 2px;"></div>
<svg class="a" style="left:1668px;top:0px;" width="4" height="5" viewBox="0 0 4 5"><path d="M0 4 L4 0 L4 4 Z" fill="#bbb"/></svg>
<div class="a" style="left:1669px;top:981px;width:3px;height:3px;background:#c8c8c8;"></div>
</body></html>
